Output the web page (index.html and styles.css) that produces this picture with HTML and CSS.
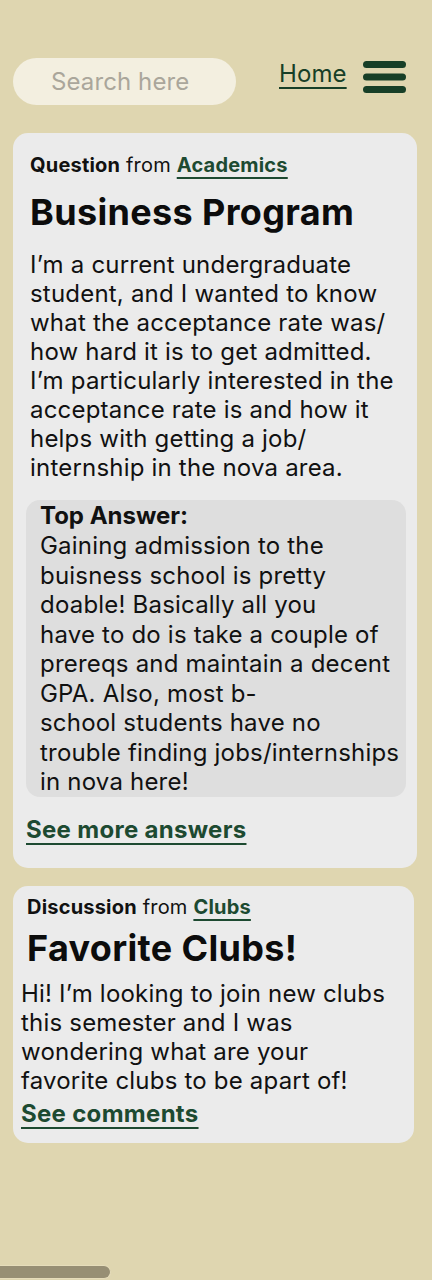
FILE: index.html
```html
<!DOCTYPE html>
<html lang="en">
<head>
<meta charset="utf-8">
<title>Forum</title>
<link rel="stylesheet" href="styles.css">
</head>
<body>
<div class="page">
  <header class="top">
    <div class="search">Search here</div>
    <a class="home" href="#">Home</a>
    <svg class="menu" width="43" height="34" viewBox="0 0 43 34" aria-hidden="true">
      <rect x="0" y="1" width="43" height="7" rx="3.5" fill="#173f27"/>
      <rect x="0" y="13.5" width="43" height="7" rx="3.5" fill="#173f27"/>
      <rect x="0" y="26" width="43" height="7" rx="3.5" fill="#173f27"/>
    </svg>
  </header>

  <section class="card card-q">
    <p class="meta"><b>Question</b> from <a href="#">Academics</a></p>
    <h1 class="title">Business Program</h1>
    <p class="body">I’m a current undergraduate<br>student, and I wanted to know<br>what the acceptance rate was/<br>how hard it is to get admitted.<br>I’m particularly interested in the<br>acceptance rate is and how it<br>helps with getting a job/<br>internship in the nova area.</p>
    <div class="answer">
      <p class="answer-head">Top Answer:</p>
      <p class="answer-text">Gaining admission to the<br>buisness school is pretty<br>doable! Basically all you<br>have to do is take a couple of<br>prereqs and maintain a decent<br>GPA. Also, most b-<br>school students have no<br>trouble finding jobs/internships<br>in nova here!</p>
    </div>
    <a class="more" href="#">See more answers</a>
  </section>

  <section class="card card-d">
    <p class="meta"><b>Discussion</b> from <a href="#">Clubs</a></p>
    <h1 class="title">Favorite Clubs!</h1>
    <p class="body">Hi! I’m looking to join new clubs<br>this semester and I was<br>wondering what are your<br>favorite clubs to be apart of!</p>
    <a class="more" href="#">See comments</a>
  </section>
</div>
<div class="scroll-thumb"></div>
</body>
</html>
```

FILE: styles.css
```css
html, body {
  margin: 0;
  padding: 0;
  background: #dfd6b0;
}
body {
  font-family: Inter, "Noto Sans", sans-serif;
  color: #111;
  min-height: 1280px;
}
p, h1 { margin: 0; }
.page {
  padding: 58px 0 0 13px;
  display: flex;
  flex-direction: column;
}
.top {
  display: flex;
  align-items: flex-start;
  height: 75px;
}
.search {
  width: 185px;
  height: 47px;
  padding-left: 38px;
  border-radius: 24px;
  background: #f3efe0;
  color: #aaa69b;
  font-size: 24px;
  line-height: 48px;
  letter-spacing: 0.1px;
  white-space: nowrap;
}
.home {
  margin-left: 43px;
  margin-top: 1px;
  font-size: 24px;
  line-height: 29px;
  letter-spacing: 0.1px;
  color: #173f27;
  text-decoration: underline;
  text-decoration-thickness: 2px;
  text-underline-offset: 5px;
}
.menu {
  margin-left: 16px;
  margin-top: 2px;
  display: block;
}
.card {
  background: #ebebeb;
  border-radius: 15px;
  display: flex;
  flex-direction: column;
  align-items: flex-start;
}
.card-q {
  width: 380px;
  padding: 20px 11px 24px 13px;
}
.card-d {
  width: 393px;
  margin-top: 18px;
  padding: 9px 0 15px 8px;
}
.meta {
  font-size: 20px;
  line-height: 24px;
  letter-spacing: 0.2px;
  color: #111;
  white-space: nowrap;
}
.meta b { font-weight: 700; }
.meta a, .more {
  color: #1d4a31;
  font-weight: 700;
  text-decoration: underline;
  text-decoration-thickness: 2px;
  text-underline-offset: 5px;
}
.title {
  font-size: 36px;
  font-weight: 700;
  line-height: 44px;
  letter-spacing: 0.35px;
  color: #0c0c0c;
  white-space: nowrap;
}
.body {
  font-size: 24px;
  line-height: 29px;
  letter-spacing: 0.2px;
  white-space: nowrap;
}
.card-q .meta, .card-q .title, .card-q .body { margin-left: 4px; }
.card-q .title { margin-top: 13px; }
.card-q .body { margin-top: 16px; }
.card-d .meta, .card-d .title { margin-left: 6px; }
.card-d .title { margin-top: 7px; }
.card-d .body { margin-top: 9px; }
.answer {
  margin-top: 18px;
  width: 366px;
  padding: 0 0 0 14px;
  background: #dedede;
  border-radius: 14px;
}
.answer-head {
  font-size: 24px;
  font-weight: 700;
  line-height: 31px;
}
.answer-text {
  font-size: 24px;
  line-height: 29.5px;
  letter-spacing: 0.2px;
  white-space: nowrap;
}
.more {
  font-size: 24px;
  line-height: 29px;
  letter-spacing: 0.3px;
}
.card-q .more { margin-top: 18px; }
.card-d .more { margin-top: 4px; }
.scroll-thumb {
  position: fixed;
  left: 0;
  bottom: 1px;
  width: 110px;
  height: 12px;
  background: #978f74;
  border: 1px solid #e6ddbb;
  border-left: 0;
  border-radius: 0 7px 7px 0;
}
```
